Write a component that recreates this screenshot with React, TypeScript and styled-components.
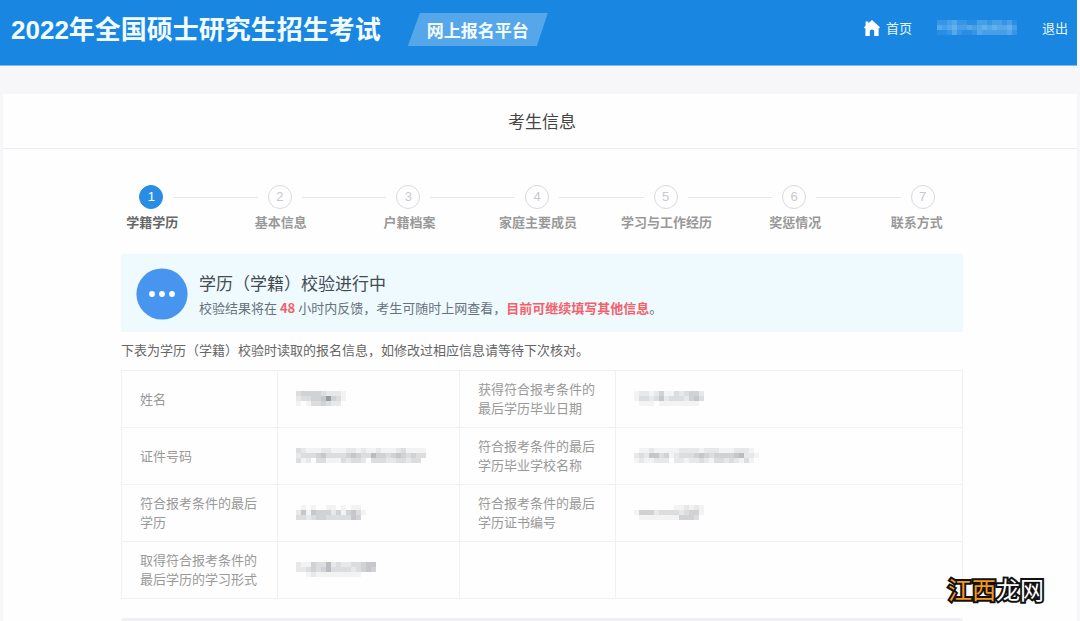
import React from "react";
import styled, { createGlobalStyle } from "styled-components";

const GlobalStyle = createGlobalStyle`
  * { box-sizing: border-box; }
  body {
    margin: 0;
    background: #f7f6f9;
    color: #555;
    font: 13px/20px "Noto Sans CJK SC", sans-serif;
  }
`;

const Page = styled.div`
  position: relative;
  display: flex;
  flex-direction: column;
  min-height: 100vh;
`;

const Header = styled.header`
  display: flex;
  align-items: center;
  min-height: 66px;
  margin-right: 3px;
  padding: 0 9px 6px 11px;
  background: #1986e1;
  border-bottom: 1px solid #7dbcf0;
  color: #fff;
`;

const SiteTitle = styled.h1`
  margin: 0;
  font: bold 26px/40px "Liberation Sans", "Noto Sans CJK SC", sans-serif;
  color: #f2fbff;
`;

const Platform = styled.span`
  margin-left: 27px;
  padding: 0 19px;
  background: #56a7ea;
  clip-path: polygon(12px 0, 100% 0, calc(100% - 11px) 100%, 0 100%);
  font-size: 17px;
  font-weight: bold;
  line-height: 33px;
  color: #f2fbff;
`;

const Nav = styled.nav`
  display: flex;
  align-items: center;
  gap: 25px;
  margin-left: auto;
  padding-bottom: 4px;
`;

const NavLink = styled.a`
  display: flex;
  align-items: center;
  gap: 6px;
  color: #e6f6ff;
  text-decoration: none;
`;

const Panel = styled.main`
  flex: 1;
  margin: 28px 3px 0;
  background: #fefefe;
`;

const PanelTitle = styled.h2`
  margin: 0;
  padding: 14px 0 14px 4px;
  border-bottom: 1px solid #eeedf3;
  font-size: 17px;
  font-weight: normal;
  line-height: 26px;
  text-align: center;
  color: #444;
`;

const Content = styled.div`
  max-width: 846px;
  margin: 0 auto;
  padding: 36px 0 0 4px;
`;

const Steps = styled.ol`
  display: grid;
  grid-template-columns: repeat(7, 1fr);
  margin: 0 -24px 22px -34px;
  padding: 0;
  list-style: none;
`;

const Step = styled.li<{ $active: boolean }>`
  display: flex;
  flex-direction: column;
  gap: 3px;
  font-weight: bold;
  text-align: center;
  color: ${(p) => (p.$active ? "#666" : "#999")};
`;

const StepTrack = styled.div`
  display: flex;
  align-items: center;
  gap: 10px;
`;

const StepLine = styled.span<{ $hidden: boolean }>`
  flex: 1;
  height: 1px;
  background: ${(p) => (p.$hidden ? "transparent" : "#e6e6ec")};
`;

const StepNumber = styled.span<{ $active: boolean }>`
  width: 24px;
  border: 1px solid ${(p) => (p.$active ? "#2a8de4" : "#dad8e0")};
  border-radius: 50%;
  background: ${(p) => (p.$active ? "#2a8de4" : "#fefefe")};
  color: ${(p) => (p.$active ? "#fff" : "#c9c7cf")};
  font: 13px/22px "Liberation Sans", sans-serif;
`;

const StepName = styled.span`
  padding-left: 2px;

  ${Step}:last-child & {
    padding: 0 12px 0 0;
  }
`;

const Notice = styled.section`
  display: flex;
  align-items: center;
  gap: 11px;
  padding: 14px 15px 12px;
  background: #eefafe;
`;

const NoticeText = styled.div`
  padding-top: 2px;
  line-height: 25px;
  color: #68727c;
`;

const NoticeTitle = styled.h3`
  margin: 0;
  font-size: 17px;
  font-weight: normal;
  color: #444b52;
`;

const NoticeBody = styled.p`
  margin: 0;
`;

const Alert = styled.strong`
  color: #f4606a;
`;

const Hint = styled.p`
  margin: 8px 0 10px;
  color: #666;
`;

const InfoTable = styled.table`
  width: 100%;
  table-layout: fixed;
  border-collapse: collapse;
  line-height: 19px;
`;

const cell = `
  height: 57px;
  padding: 0 18px 2px;
  border: 1px solid #f2eff6;
`;

const LabelCell = styled.th`
  ${cell}
  font-weight: normal;
  text-align: left;
  color: #999;
`;

const ValueCell = styled.td`
  ${cell}
`;

const LabelCol = styled.col`
  width: 156px;
`;

const ValueCol = styled.col`
  width: 182px;
`;

const NextSection = styled.div`
  height: 3px;
  margin-top: 19px;
  border-radius: 3px 3px 0 0;
  background: #f0f0f2;
`;

const Watermark = styled.div`
  position: absolute;
  right: 36px;
  bottom: 16px;
  font-size: 24px;
  line-height: 32px;
  color: #fff;
  -webkit-text-stroke: 4px #111;
  paint-order: stroke fill;
`;

const Orange = styled.span`
  color: #f7981d;
`;

const MosaicSvg = styled.svg`
  display: block;
`;

/* Masked value: each digit is the strength of one 5px tile. */
function Mosaic({ rows, color = "#70757c" }: { rows: string[]; color?: string }) {
  const width = rows[0].length * 5;
  const height = rows.length * 5;
  return (
    <MosaicSvg width={width} height={height} shapeRendering="crispEdges" aria-hidden="true">
      {rows.flatMap((row, y) =>
        row.split("").map((level, x) => (
          <rect
            key={`${x}-${y}`}
            x={x * 5}
            y={y * 5}
            width={5}
            height={5}
            fill={color}
            opacity={Number(level) * 0.08}
          />
        ))
      )}
    </MosaicSvg>
  );
}

function HomeIcon() {
  return (
    <svg width="16" height="16" viewBox="0 0 16 16" fill="#fff" aria-hidden="true">
      <path d="M8 0 16 7.3 15 8.5 14.6 8.2V16H10.2V11.4Q10.2 9.4 8 9.4T5.8 11.4V16H1.4V8.2L1 8.5 0 7.3 1.6 5.8V1.4H4.4V3.2Z" />
    </svg>
  );
}

function PendingIcon() {
  return (
    <svg width="52" height="52" viewBox="0 0 52 52" aria-hidden="true">
      <circle cx="26" cy="26" r="25.6" fill="#4795ee" />
      <g fill="#fff">
        <circle cx="16" cy="26" r="2.9" />
        <circle cx="26" cy="26" r="2.9" />
        <circle cx="36" cy="26" r="2.9" />
      </g>
    </svg>
  );
}

const steps = [
  "学籍学历",
  "基本信息",
  "户籍档案",
  "家庭主要成员",
  "学习与工作经历",
  "奖惩情况",
  "联系方式",
];

type Field = { label: string; value: string[] };

const records: [Field, Field | null][] = [
  [
    { label: "姓名", value: ["3444432221", "2334459431", "1013343220"] },
    {
      label: "获得符合报考条件的最后学历毕业日期",
      value: ["12212411323442", "13323523332453", "01110111111110"],
    },
  ],
  [
    {
      label: "证件号码",
      value: [
        "32111221112212112111231111",
        "23334533334543364434543433",
        "31203311132332033322332330",
      ],
    },
    {
      label: "符合报考条件的最后学历毕业学校名称",
      value: [
        "0112111112222122211122210",
        "2325534123334543444456221",
        "1211222022122321332321310",
      ],
    },
  ],
  [
    {
      label: "符合报考条件的最后学历",
      value: ["01010011010110", "25154442414531", "33234433333540"],
    },
    {
      label: "符合报考条件的最后学历证书编号",
      value: ["00000000112121", "14442333323441", "01111111144430"],
    },
  ],
  [
    {
      label: "取得符合报考条件的最后学历的学习形式",
      value: ["2114336232233455", "2234346333323454", "0012111111111000"],
    },
    null,
  ],
];

export default function App() {
  return (
    <>
      <GlobalStyle />
      <Page>
        <Header>
          <SiteTitle>2022年全国硕士研究生招生考试</SiteTitle>
          <Platform>网上报名平台</Platform>
          <Nav>
            <NavLink href="#home">
              <HomeIcon />
              首页
            </NavLink>
            <Mosaic
              color="#d5efff"
              rows={["2234221133233231", "4345334345454453", "1124211243333342"]}
            />
            <NavLink href="#logout">退出</NavLink>
          </Nav>
        </Header>
        <Panel>
          <PanelTitle>考生信息</PanelTitle>
          <Content>
            <Steps>
              {steps.map((name, i) => (
                <Step key={name} $active={i === 0}>
                  <StepTrack>
                    <StepLine $hidden={i === 0} />
                    <StepNumber $active={i === 0}>{i + 1}</StepNumber>
                    <StepLine $hidden={i === steps.length - 1} />
                  </StepTrack>
                  <StepName>{name}</StepName>
                </Step>
              ))}
            </Steps>
            <Notice>
              <PendingIcon />
              <NoticeText>
                <NoticeTitle>学历（学籍）校验进行中</NoticeTitle>
                <NoticeBody>
                  校验结果将在 <Alert>48</Alert> 小时内反馈，考生可随时上网查看，
                  <Alert>目前可继续填写其他信息</Alert>。
                </NoticeBody>
              </NoticeText>
            </Notice>
            <Hint>下表为学历（学籍）校验时读取的报名信息，如修改过相应信息请等待下次核对。</Hint>
            <InfoTable>
              <colgroup>
                <LabelCol />
                <ValueCol />
                <LabelCol />
                <col />
              </colgroup>
              <tbody>
                {records.map(([left, right]) => (
                  <tr key={left.label}>
                    <LabelCell scope="row">{left.label}</LabelCell>
                    <ValueCell>
                      <Mosaic rows={left.value} />
                    </ValueCell>
                    {right ? (
                      <>
                        <LabelCell scope="row">{right.label}</LabelCell>
                        <ValueCell>
                          <Mosaic rows={right.value} />
                        </ValueCell>
                      </>
                    ) : (
                      <>
                        <ValueCell />
                        <ValueCell />
                      </>
                    )}
                  </tr>
                ))}
              </tbody>
            </InfoTable>
            <NextSection />
          </Content>
        </Panel>
        <Watermark>
          <Orange>江西</Orange>龙网
        </Watermark>
      </Page>
    </>
  );
}
